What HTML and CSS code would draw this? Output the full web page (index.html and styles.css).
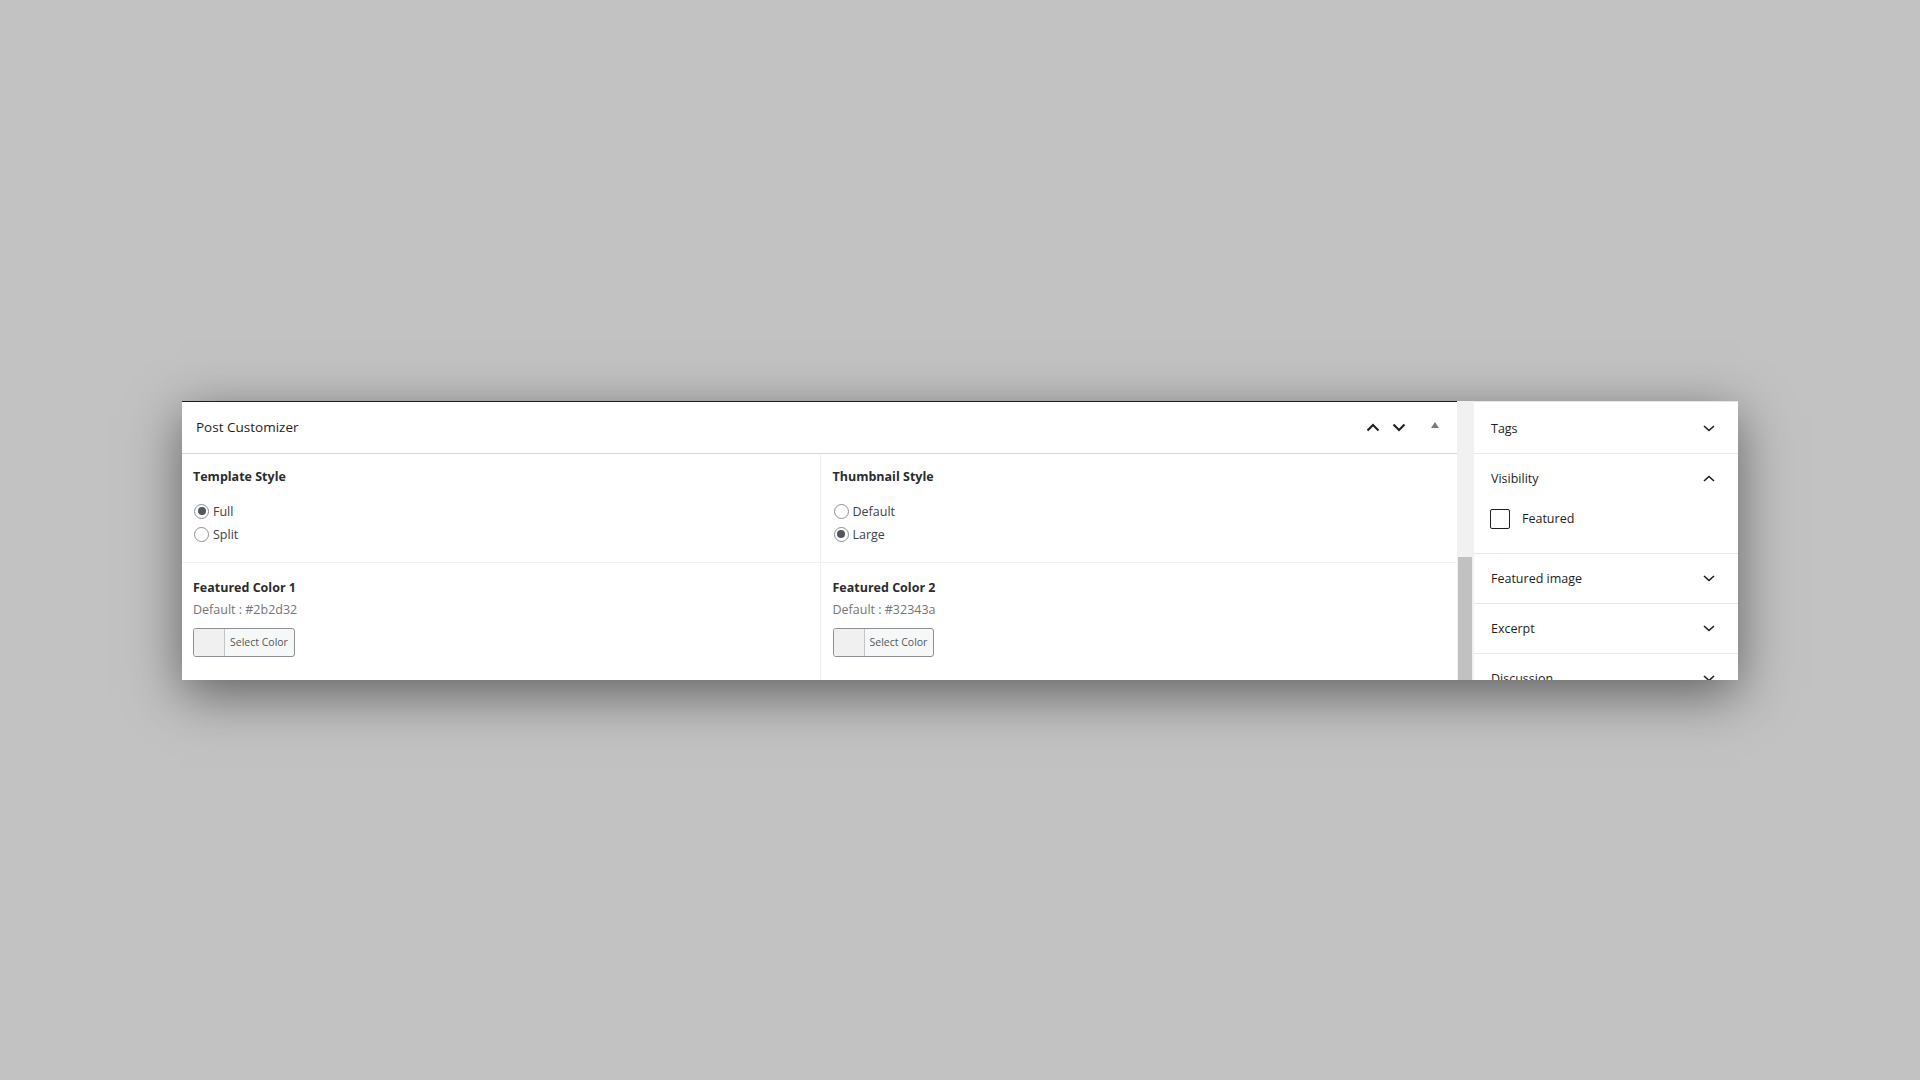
FILE: index.html
```html
<!DOCTYPE html>
<html>
<head>
    <title>Post Customizer</title>
    <meta name="viewport" content="width=device-width, initial-scale=1.0">
    <link rel="stylesheet" href="styles.css">
</head>
<body>
    <div class="frame">
        <!-- Metabox principal -->
        <div class="metabox">
            <div class="metabox-header">
                <span class="metabox-title">Post Customizer</span>
                <div class="metabox-actions">
                    <svg class="chev" width="14" height="9" viewBox="0 0 14 9"><polyline points="1.5,7.5 7,2 12.5,7.5" /></svg>
                    <svg class="chev" width="14" height="9" viewBox="0 0 14 9"><polyline points="1.5,1.5 7,7 12.5,1.5" /></svg>
                    <span class="toggle-arrow"></span>
                </div>
            </div>

            <div class="metabox-body">
                <div class="field">
                    <div class="field-title">Template Style</div>
                    <label class="choice"><input type="radio" name="template" checked> Full</label>
                    <label class="choice"><input type="radio" name="template"> Split</label>
                </div>
                <div class="field">
                    <div class="field-title">Thumbnail Style</div>
                    <label class="choice"><input type="radio" name="thumb"> Default</label>
                    <label class="choice"><input type="radio" name="thumb" checked> Large</label>
                </div>
                <div class="field color-field">
                    <div class="field-title">Featured Color 1</div>
                    <div class="field-desc">Default : #2b2d32</div>
                    <button class="color-btn"><span class="swatch"></span><span class="color-text">Select Color</span></button>
                </div>
                <div class="field color-field">
                    <div class="field-title">Featured Color 2</div>
                    <div class="field-desc">Default : #32343a</div>
                    <button class="color-btn"><span class="swatch"></span><span class="color-text">Select Color</span></button>
                </div>
            </div>
        </div>

        <!-- Scrollbar -->
        <div class="scrollbar">
            <div class="scroll-thumb"></div>
        </div>

        <!-- Sidebar -->
        <div class="sidebar">
            <div class="panel">
                <div class="panel-header">Tags
                    <svg class="side-chev" width="12" height="7" viewBox="0 0 12 7"><polyline points="1,1 6,5.5 11,1" /></svg>
                </div>
            </div>
            <div class="panel">
                <div class="panel-header">Visibility
                    <svg class="side-chev" width="12" height="7" viewBox="0 0 12 7"><polyline points="1,6 6,1.5 11,6" /></svg>
                </div>
                <div class="panel-body">
                    <label class="check"><input type="checkbox"> Featured</label>
                </div>
            </div>
            <div class="panel">
                <div class="panel-header">Featured image
                    <svg class="side-chev" width="12" height="7" viewBox="0 0 12 7"><polyline points="1,1 6,5.5 11,1" /></svg>
                </div>
            </div>
            <div class="panel">
                <div class="panel-header">Excerpt
                    <svg class="side-chev" width="12" height="7" viewBox="0 0 12 7"><polyline points="1,1 6,5.5 11,1" /></svg>
                </div>
            </div>
            <div class="panel">
                <div class="panel-header">Discussion
                    <svg class="side-chev" width="12" height="7" viewBox="0 0 12 7"><polyline points="1,1 6,5.5 11,1" /></svg>
                </div>
            </div>
        </div>
    </div>
</body>
</html>
```

FILE: styles.css
```css
body {
    margin: 0;
    padding: 0;
    background-color: #c2c2c2;
    color: #1e1e1e;
    font-family: 'Open Sans', 'Noto Sans', sans-serif;
    height: 100vh;
    display: flex;
    align-items: center;
    justify-content: center;
}

/* Marco con sombra */
.frame {
    width: 1556px;
    height: 279px;
    display: flex;
    background: #fff;
    box-shadow: 0 14px 50px rgba(0, 0, 0, 0.5);
    overflow: hidden;
}

/* Metabox */
.metabox {
    flex: 1;
    display: flex;
    flex-direction: column;
    border-top: 1px solid #1e1e1e;
}

.metabox-header {
    height: 51px;
    display: flex;
    align-items: center;
    justify-content: space-between;
    padding: 0 18px 0 14px;
    border-bottom: 1px solid #d6d6d6;
}

.metabox-title {
    font-size: 13.5px;
    color: #1e1e1e;
}

.metabox-actions {
    display: flex;
    align-items: center;
    gap: 12px;
}

.chev polyline {
    fill: none;
    stroke: #1e1e1e;
    stroke-width: 2;
}

.toggle-arrow {
    width: 0;
    height: 0;
    margin-left: 13px;
    margin-bottom: 5px;
    border-left: 4px solid transparent;
    border-right: 4px solid transparent;
    border-bottom: 6px solid #787c82;
}

.metabox-body {
    flex: 1;
    display: grid;
    grid-template-columns: 1fr 1fr;
    grid-template-rows: 109px 1fr;
}

.field {
    padding: 13px 11px 15px;
    border-bottom: 1px solid #f0f0f0;
}

.field:nth-child(2n) {
    border-left: 1px solid #f0f0f0;
    padding-left: 12px;
}

.field-title {
    font-size: 12.5px;
    font-weight: bold;
    line-height: 20px;
    color: #2c2c2c;
    margin-bottom: 13px;
}

.choice {
    display: flex;
    align-items: center;
    gap: 4px;
    height: 23px;
    font-size: 12.5px;
    color: #3c434a;
}

.choice input {
    appearance: none;
    margin: 0 0 0 1px;
    width: 15px;
    height: 15px;
    border: 1px solid #8c8f94;
    border-radius: 50%;
    display: flex;
    align-items: center;
    justify-content: center;
}

.choice input:checked::before {
    content: '';
    width: 8px;
    height: 8px;
    border-radius: 50%;
    background: #50575e;
}

/* Campos de color */
.color-field {
    padding-top: 15px;
    border-bottom: none;
}

.color-field .field-title {
    margin-bottom: 2px;
}

.field-desc {
    font-size: 12.5px;
    line-height: 20px;
    color: #757575;
}

.color-btn {
    margin-top: 8px;
    display: flex;
    height: 29px;
    padding: 0;
    border: 1px solid #8c8f94;
    border-radius: 3px;
    background: #f6f7f7;
    overflow: hidden;
    font-family: inherit;
}

.swatch {
    width: 30px;
    height: 100%;
    background: #f0f0f1;
    border-right: 1px solid #c3c4c7;
}

.color-text {
    padding: 0 6px 0 5px;
    font-size: 10.5px;
    line-height: 27px;
    color: #50575e;
}

/* Scrollbar */
.scrollbar {
    width: 17px;
    background: #f1f1f1;
    display: flex;
    flex-direction: column;
}

.scroll-thumb {
    margin: 156px 2px 0 1px;
    flex: 1;
    background: #c1c1c1;
}

/* Sidebar */
.sidebar {
    width: 264px;
    border-top: 1px solid #e6e6e6;
    padding-top: 2px;
}

.panel {
    border-bottom: 1px solid #e6e6e6;
}

.panel-header {
    height: 49px;
    display: flex;
    align-items: center;
    justify-content: space-between;
    padding: 0 23px 0 17px;
    font-size: 12.5px;
    color: #1e1e1e;
}

.side-chev polyline {
    fill: none;
    stroke: #1e1e1e;
    stroke-width: 1.6;
}

.panel-body {
    height: 50px;
    padding: 6px 16px 0;
    box-sizing: border-box;
}

.check {
    display: flex;
    align-items: center;
    gap: 12px;
    font-size: 12.5px;
    color: #1e1e1e;
}

.check input {
    appearance: none;
    margin: 0;
    width: 20px;
    height: 20px;
    border: 1px solid #1e1e1e;
    border-radius: 2px;
}
```
